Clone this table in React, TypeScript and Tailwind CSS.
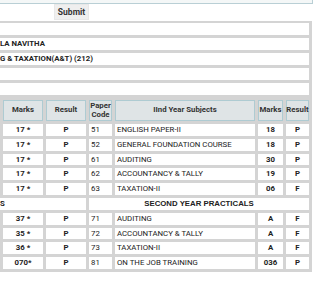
import React from "react";

type Row = {
  marks: string;
  result: string;
  code: string;
  subject: string;
  marks2: string;
  result2: string;
};

const THEORY: Row[] = [
  { marks: "17 *", result: "P", code: "51", subject: "ENGLISH PAPER-II", marks2: "18", result2: "P" },
  { marks: "17 *", result: "P", code: "52", subject: "GENERAL FOUNDATION COURSE", marks2: "18", result2: "P" },
  { marks: "17 *", result: "P", code: "61", subject: "AUDITING", marks2: "30", result2: "P" },
  { marks: "17 *", result: "P", code: "62", subject: "ACCOUNTANCY & TALLY", marks2: "19", result2: "P" },
  { marks: "17 *", result: "P", code: "63", subject: "TAXATION-II", marks2: "06", result2: "F" },
];

const PRACTICALS: Row[] = [
  { marks: "37 *", result: "P", code: "71", subject: "AUDITING", marks2: "A", result2: "F" },
  { marks: "35 *", result: "P", code: "72", subject: "ACCOUNTANCY & TALLY", marks2: "A", result2: "F" },
  { marks: "36 *", result: "P", code: "73", subject: "TAXATION-II", marks2: "A", result2: "F" },
  { marks: "070*", result: "P", code: "81", subject: "ON THE JOB TRAINING", marks2: "036", result2: "P" },
];

const INFO = ["", "LA NAVITHA", "G & TAXATION(A&T) (212)", "", ""];

// header cell
function Head({ children }: { children: React.ReactNode }) {
  return (
    <div className="h-[21px] bg-[#dfe4e6] border border-[#aecbd2] flex items-center justify-center text-center font-bold text-[7.8px] leading-[8.5px] text-[#333]">
      {children}
    </div>
  );
}

function Cell({
  children,
  bold,
  left,
}: {
  children: React.ReactNode;
  bold?: boolean;
  left?: boolean;
}) {
  return (
    <div
      className={
        "h-[11.8px] bg-white flex items-center text-[7.8px] text-[#222] whitespace-nowrap " +
        (bold ? "font-bold " : "") +
        (left ? "justify-start pl-[2px]" : "justify-center")
      }
    >
      {children}
    </div>
  );
}

function ResultRow({ r }: { r: Row }) {
  return (
    <>
      <Cell bold>{r.marks}</Cell>
      <Cell bold>{r.result}</Cell>
      <Cell left>{r.code}</Cell>
      <Cell left>{r.subject}</Cell>
      <Cell bold>{r.marks2}</Cell>
      <Cell bold>{r.result2}</Cell>
    </>
  );
}

export default function App() {
  return (
    <div className="w-[324px] h-[281px] bg-white overflow-hidden font-[Roboto,sans-serif]">
      {/* search input + submit */}
      <div className="w-[313px] h-[4px] bg-[#f4f7f7] border-b border-r border-[#b9cfd5]" />
      <div className="h-[17px] pl-[54px] flex items-start">
        <button className="w-[35px] h-[16px] bg-[#efefef] border border-[#e8e8e8] flex items-center justify-center text-[8.5px] leading-none font-bold text-[#333]">
          Submit
        </button>
      </div>

      {/* student info */}
      <div className="w-[312px] bg-[#d4d4d4] pt-[2px] pb-[3px] pr-[3px] flex flex-col gap-[3px]">
        {INFO.map((t, i) => (
          <div
            key={i}
            className="h-[12px] bg-white flex items-center text-[7.8px] font-bold text-[#222] whitespace-nowrap"
          >
            {t}
          </div>
        ))}
      </div>

      {/* marks table */}
      <div className="w-[312px] bg-[#d4d4d4] pt-[2px] pb-[3px] px-[3px] grid grid-cols-[40px_40px_23px_140px_25px_23px] gap-[3px]">
        <Head>Marks</Head>
        <Head>Result</Head>
        <Head>
          Paper
          <br />
          Code
        </Head>
        <Head>IInd Year Subjects</Head>
        <Head>Marks</Head>
        <Head>Result</Head>

        {THEORY.map((r) => (
          <ResultRow key={r.code} r={r} />
        ))}

        <div className="col-span-2 -ml-[3px] h-[11.8px] bg-white flex items-center text-[7.8px] font-bold text-[#222]">
          S
        </div>
        <div className="col-span-4 h-[11.8px] bg-white flex items-center justify-center text-[7.8px] font-bold text-[#222] font-[Liberation_Sans,sans-serif]">
          SECOND YEAR PRACTICALS
        </div>

        {PRACTICALS.map((r) => (
          <ResultRow key={r.code} r={r} />
        ))}
      </div>
    </div>
  );
}
